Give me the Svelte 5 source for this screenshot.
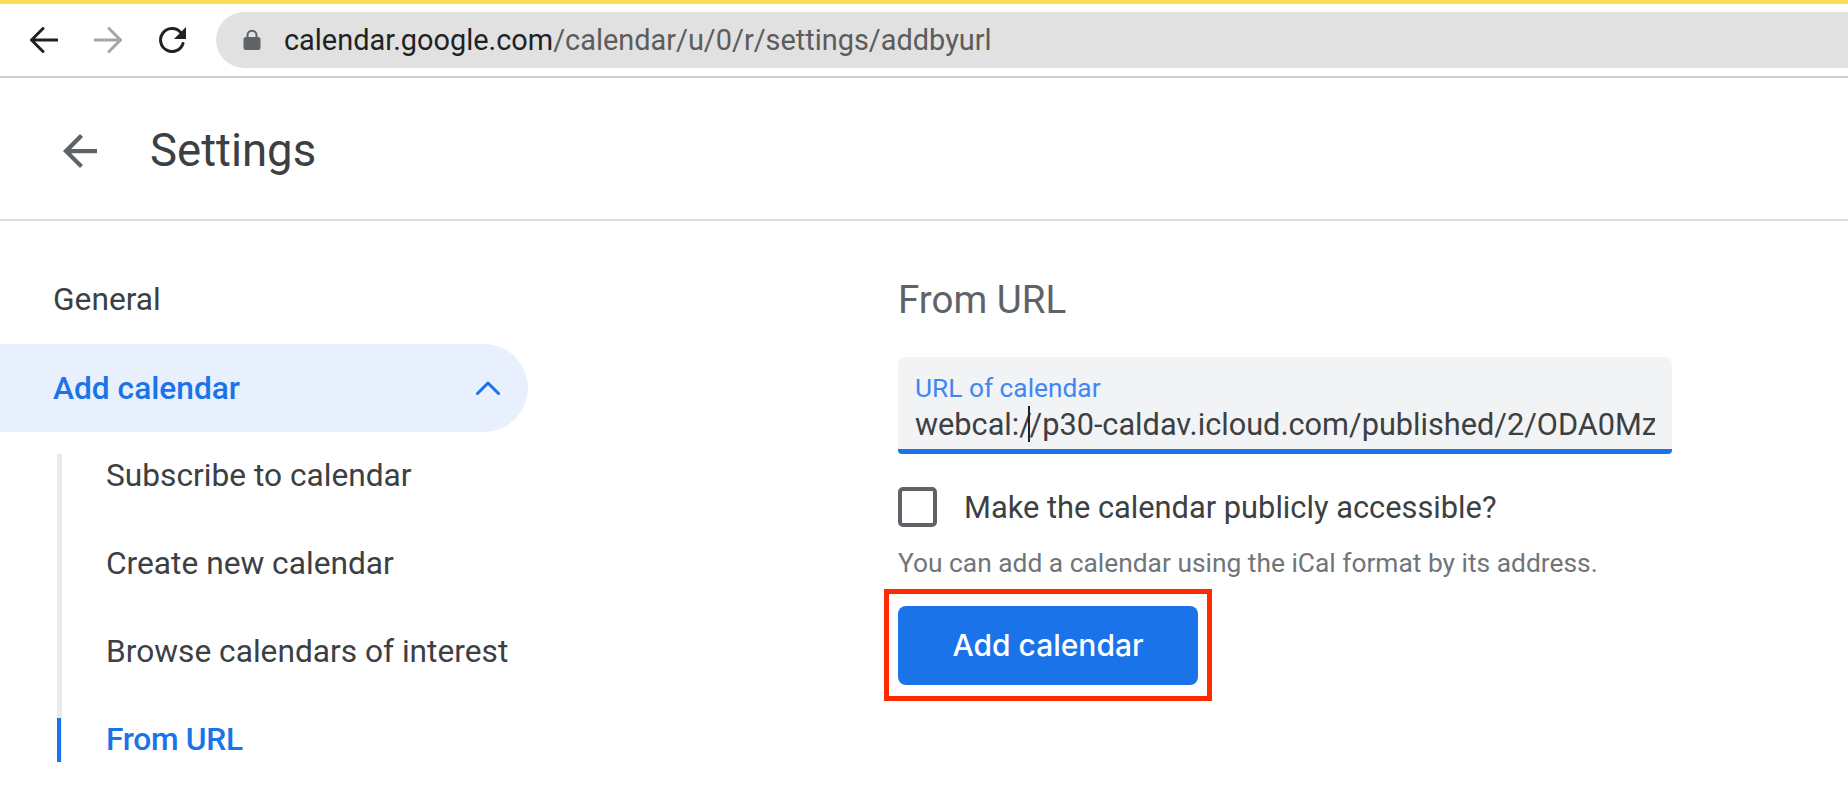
<script>
  const subItems = [
    { label: 'Subscribe to calendar', active: false },
    { label: 'Create new calendar', active: false },
    { label: 'Browse calendars of interest', active: false },
    { label: 'From URL', active: true }
  ];
</script>

<div class="page">
  <div class="stripe"></div>
  <div class="toolbar">
    <svg class="nav back" viewBox="0 0 28 26"><path d="M27 13H2M13 1.500L1.500 13 13 24.500"/></svg>
    <svg class="nav fwd" viewBox="0 0 28 26"><path d="M1 13h25M15 1.500L26.500 13 15 24.500"/></svg>
    <svg class="nav reload" viewBox="0 0 28 26">
      <path d="M22.500 5.200A11.500 11.500 0 1 0 25 16.500"/>
      <polygon class="solid" points="28,0 28,12 16,12"/>
    </svg>
    <div class="omnibox">
      <svg class="lock" viewBox="0 0 18 21">
        <path class="shackle" d="M4.500 10V6.200a4.500 4.500 0 0 1 9 0V10"/>
        <rect class="solid" x="0.500" y="8" width="17" height="13" rx="2.500"/>
      </svg>
      <span class="url"><span class="host">calendar.google.com</span>/calendar/u/0/r/settings/addbyurl</span>
    </div>
  </div>

  <header class="head">
    <svg class="head-back" viewBox="4 4 16 16"><path d="M20 11H7.830l5.590-5.590L12 4l-8 8 8 8 1.410-1.410L7.830 13H20v-2z"/></svg>
    <h1>Settings</h1>
  </header>

  <div class="body">
    <nav class="side">
      <div class="general">General</div>
      <div class="add">
        <span>Add calendar</span>
        <svg class="chev" viewBox="0 0 24 14"><path d="M1.500 12.500L12 2l10.500 10.500"/></svg>
      </div>
      <ul class="sub">
        {#each subItems as item}
          <li class:active={item.active}>{item.label}</li>
        {/each}
      </ul>
    </nav>

    <main class="content">
      <h2>From URL</h2>
      <div class="field">
        <div class="field-label">URL of calendar</div>
        <div class="field-value">webcal:/<span class="caret"></span>/p30-caldav.icloud.com/published/2/ODA0Mz</div>
      </div>
      <label class="check">
        <span class="box"></span>
        <span>Make the calendar publicly accessible?</span>
      </label>
      <p class="help">You can add a calendar using the iCal format by its address.</p>
      <div class="highlight">
        <button class="primary">Add calendar</button>
      </div>
    </main>
  </div>
</div>

<style>
  :global(body) {
    margin: 0;
    background: #fff;
    font-family: Roboto, "Liberation Sans", sans-serif;
  }
  .page {
    width: 1848px;
    height: 798px;
    overflow: hidden;
    background: #fff;
  }
  .stripe {
    height: 4px;
    background: #ffdd5c;
  }
  .toolbar {
    height: 74px;
    box-sizing: border-box;
    border-bottom: 2px solid #cfcfcf;
    display: flex;
    align-items: flex-start;
    padding-top: 8px;
  }
  .nav {
    width: 28px;
    height: 26px;
    margin-top: 15px;
    fill: none;
    stroke: #202124;
    stroke-width: 3;
    stroke-linecap: round;
    stroke-linejoin: round;
    flex: none;
  }
  .nav .solid { fill: #202124; stroke: none; }
  .back { margin-left: 30px; }
  .fwd { margin-left: 36px; stroke: #a6a6a6; }
  .reload { margin-left: 36px; }
  .omnibox {
    margin-left: 30px;
    flex: 1;
    height: 56px;
    background: #e1e1e1;
    border-radius: 28px 0 0 28px;
    display: flex;
    align-items: center;
  }
  .lock {
    width: 18px;
    height: 21px;
    margin-left: 27px;
    margin-top: -2px;
  }
  .lock .solid { fill: #5f6368; }
  .lock .shackle { fill: none; stroke: #5f6368; stroke-width: 2; }
  .url {
    margin-left: 23px;
    font-size: 28.900px;
    color: #5c5c5c;
  }
  .host { color: #202124; }
  .head {
    height: 143px;
    box-sizing: border-box;
    border-bottom: 2px solid #dadce0;
    display: flex;
    align-items: center;
  }
  .head-back {
    width: 36px;
    height: 34px;
    margin-left: 62px;
    margin-top: 4px;
    fill: #5f6368;
  }
  h1 {
    margin: 4px 0 0 52px;
    font-size: 45.5px;
    font-weight: 400;
    color: #3c4043;
  }
  .body {
    display: flex;
  }
  .side {
    width: 898px;
    padding-top: 35px;
    flex: none;
    font-size: 31.7px;
    color: #3c4043;
  }
  .general {
    height: 88px;
    line-height: 88px;
    padding-left: 53px;
  }
  .add {
    width: 528px;
    height: 88px;
    box-sizing: border-box;
    padding: 0 28px 0 53px;
    background: #e8f0fe;
    border-radius: 0 44px 44px 0;
    color: #1a73e8;
    font-weight: 500;
    display: flex;
    align-items: center;
    justify-content: space-between;
  }
  .chev {
    width: 24px;
    height: 14px;
    fill: none;
    stroke: #1a73e8;
    stroke-width: 3;
    stroke-linecap: round;
    stroke-linejoin: round;
  }
  .sub {
    list-style: none;
    margin: 22px 0 0 57px;
    padding: 0;
    border-left: 5px solid #e8eaed;
    width: 471px;
  }
  .sub li {
    height: 88px;
    line-height: 88px;
    padding-left: 45px;
    margin-left: -5px;
    border-left: 4px solid transparent;
  }
  .sub li:first-child { height: 66px; line-height: 44px; }
  .sub li.active {
    height: 44px;
    line-height: 44px;
    margin-top: 22px;
    color: #1a73e8;
    font-weight: 500;
    letter-spacing: -0.3px;
    border-left-color: #1a73e8;
  }
  .content {
    padding-top: 35px;
  }
  h2 {
    margin: 0;
    height: 101px;
    line-height: 88px;
    font-size: 38.500px;
    font-weight: 400;
    color: #5f6368;
  }
  .field {
    width: 774px;
    height: 97px;
    box-sizing: border-box;
    background: #f1f3f4;
    border-radius: 8px 8px 4px 4px;
    border-bottom: 5px solid #1a73e8;
    padding: 16px 17px 0;
    overflow: hidden;
  }
  .field-label {
    font-size: 26.300px;
    line-height: 31px;
    color: #4285f4;
  }
  .field-value {
    font-size: 30.700px;
    line-height: 40px;
    margin-top: 1px;
    color: #3c4043;
    white-space: nowrap;
    overflow: hidden;
  }
  .caret {
    display: inline-block;
    width: 2px;
    height: 36px;
    margin-left: -3.500px;
    margin-right: -0.900px;
    background: #202124;
    vertical-align: -7px;
  }
  .check {
    display: flex;
    align-items: center;
    gap: 27px;
    margin-top: 33px;
    font-size: 30.800px;
    color: #3c4043;
  }
  .box {
    width: 39px;
    height: 40px;
    box-sizing: border-box;
    border: 4px solid #5f6368;
    border-radius: 5px;
    flex: none;
  }
  .help {
    margin: 18px 0 0;
    font-size: 26.350px;
    line-height: 36px;
    color: #70757a;
  }
  .highlight {
    margin: 8px 0 0 -14px;
    width: 328px;
    height: 112px;
    box-sizing: border-box;
    border: 5px solid #ff2a00;
    padding: 12px 9px;
  }
  .primary {
    display: block;
    width: 300px;
    height: 79px;
    border: 0;
    border-radius: 8px;
    background: #1a73e8;
    color: #fff;
    font: 500 30px Inter, Roboto, sans-serif;
    padding: 0 0 2px;
  }
</style>
